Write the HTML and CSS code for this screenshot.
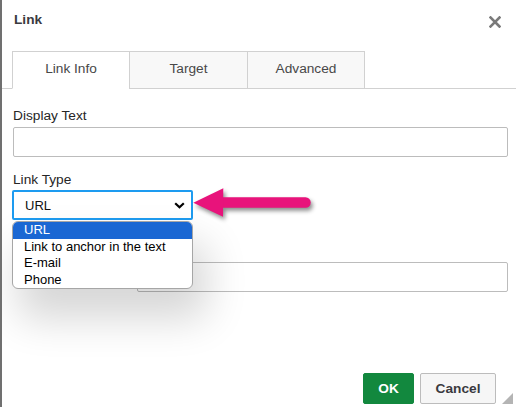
FILE: index.html
```
<!DOCTYPE html>
<html lang="en">
<head>
<meta charset="utf-8">
<title>Link</title>
<link rel="stylesheet" href="styles.css">
</head>
<body>
<div class="dialog">
  <div class="edge-mark"></div>
  <div class="header">
    <span class="title">Link</span>
    <svg class="close" width="12" height="12" viewBox="0 0 12 12"><path d="M1.5 1.5L10.5 10.5M10.5 1.5L1.5 10.5" stroke="#7a7a7a" stroke-width="2.6" stroke-linecap="square"/></svg>
  </div>
  <div class="tabs">
    <div class="tab active">Link Info</div>
    <div class="tab">Target</div>
    <div class="tab">Advanced</div>
  </div>
  <div class="content">
    <div class="field f1">
      <label class="label">Display Text</label>
      <div class="input"></div>
    </div>
    <div class="field f2">
      <label class="label">Link Type</label>
      <div class="select-wrap">
        <div class="select">
          <span>URL</span>
          <svg class="chev" width="11" height="7" viewBox="0 0 11 7"><path d="M1.2 1.2L5.5 5.3L9.8 1.2" fill="none" stroke="#000" stroke-width="2.2"/></svg>
        </div>
        <ul class="dropdown">
          <li class="sel">URL</li>
          <li>Link to anchor in the text</li>
          <li>E-mail</li>
          <li>Phone</li>
        </ul>
      </div>
    </div>
    <div class="field f3">
      <div class="spacer"></div>
      <div class="col">
        <div class="input"></div>
      </div>
    </div>
  </div>
  <div class="footer">
    <button class="btn ok">OK</button>
    <button class="btn cancel">Cancel</button>
  </div>
  <svg class="arrow" width="130" height="46" viewBox="0 0 130 46">
    <path d="M35 19.5H117.5" stroke="#e8137b" stroke-width="10.5" stroke-linecap="round"/>
    <polygon points="5.3,19.7 35.3,5.3 35,33.7" fill="#e8137b"/>
  </svg>
  <svg class="grip" width="11" height="11" viewBox="0 0 11 11"><polygon points="0,11 11,11 11,0" fill="#b4b4b4"/></svg>
</div>
</body>
</html>
```
FILE: styles.css
```
html, body {
  margin: 0;
  padding: 0;
  background: #fff;
}
body {
  font-family: "Liberation Sans", Arial, sans-serif;
  font-size: 13.7px;
  color: #333;
}
.dialog {
  position: relative;
  width: 516px;
  height: 407px;
  box-sizing: border-box;
  border-left: 2px solid #707070;
  display: flex;
  flex-direction: column;
  overflow: hidden;
}
.edge-mark {
  position: absolute;
  left: -2px;
  top: 161px;
  width: 2px;
  height: 11px;
  background: #5a1f8a;
}
.header {
  height: 51px;
  box-sizing: border-box;
  padding: 12px 0 0 12px;
  display: flex;
  align-items: flex-start;
  justify-content: space-between;
}
.title {
  font-weight: bold;
  line-height: 16px;
  color: #3a3a3f;
}
.close {
  margin: 4px 15px 0 0;
}
.tabs {
  display: flex;
  padding-left: 10px;
  border-bottom: 1px solid #d1d1d1;
}
.tab {
  width: 117px;
  height: 36px;
  line-height: 33px;
  box-sizing: content-box;
  text-align: center;
  background: #f8f8f8;
  border: 1px solid #d1d1d1;
  margin-bottom: -1px;
  color: #484848;
}
.tab + .tab {
  margin-left: -1px;
  width: 117px;
}
.tab:last-child {
  width: 116px;
}
.tab.active {
  background: #fff;
  border-bottom-color: #fff;
  width: 116px;
}
.content {
  padding: 0 8px 0 11px;
}
.label {
  display: block;
  line-height: 16px;
  color: #262626;
}
.input {
  height: 30px;
  box-sizing: border-box;
  border: 1px solid #bcbcbc;
  border-radius: 2px;
  background: #fff;
}
.f1 {
  margin-top: 19px;
}
.f1 .label {
  margin-bottom: 3px;
}
.f2 {
  margin-top: 15px;
}
.f2 .label {
  margin-bottom: 2px;
}
.select-wrap {
  position: relative;
  width: 181px;
  margin-left: -1px;
  z-index: 2;
}
.select {
  height: 30px;
  box-sizing: border-box;
  border: 2px solid #1d9bf0;
  border-radius: 2px;
  display: flex;
  align-items: center;
  justify-content: space-between;
  padding: 0 6px 0 11px;
  font-size: 13px;
  color: #111;
}
.chev {
  margin-top: 1px;
}
.dropdown {
  position: absolute;
  left: 0;
  top: 31px;
  width: 181px;
  box-sizing: border-box;
  margin: 0;
  padding: 0;
  list-style: none;
  background: #fff;
  border: 1px solid #a6a6a6;
  border-radius: 6px;
  overflow: hidden;
  box-shadow: 10px 26px 40px 4px rgba(0, 0, 0, 0.16);
  font-size: 13px;
  color: #000;
}
.dropdown li {
  line-height: 16.5px;
  padding-left: 11px;
}
.dropdown li.sel {
  background: #1a67d3;
  color: #fff;
}
.f3 {
  margin-top: 42px;
  display: flex;
}
.f3 .spacer {
  width: 124px;
  flex: none;
}
.f3 .col {
  flex: 1;
}
.footer {
  margin-top: auto;
  display: flex;
  justify-content: flex-end;
  gap: 6px;
  padding: 0 20px 3px 0;
}
.btn {
  height: 31px;
  box-sizing: border-box;
  border-radius: 2px;
  font-family: "Liberation Sans", Arial, sans-serif;
  font-size: 13.7px;
  font-weight: bold;
  padding: 0;
}
.ok {
  width: 51px;
  background: #12883e;
  border: 1px solid #12883e;
  color: #fff;
}
.cancel {
  width: 76px;
  background: #f6f6f6;
  border: 1px solid #bcbcbc;
  color: #3a3a3f;
}
.arrow {
  position: absolute;
  left: 186px;
  top: 183px;
  filter: drop-shadow(2px 3px 2px rgba(0, 0, 0, 0.45));
  z-index: 3;
}
.grip {
  position: absolute;
  right: 3px;
  bottom: 3px;
}
```
